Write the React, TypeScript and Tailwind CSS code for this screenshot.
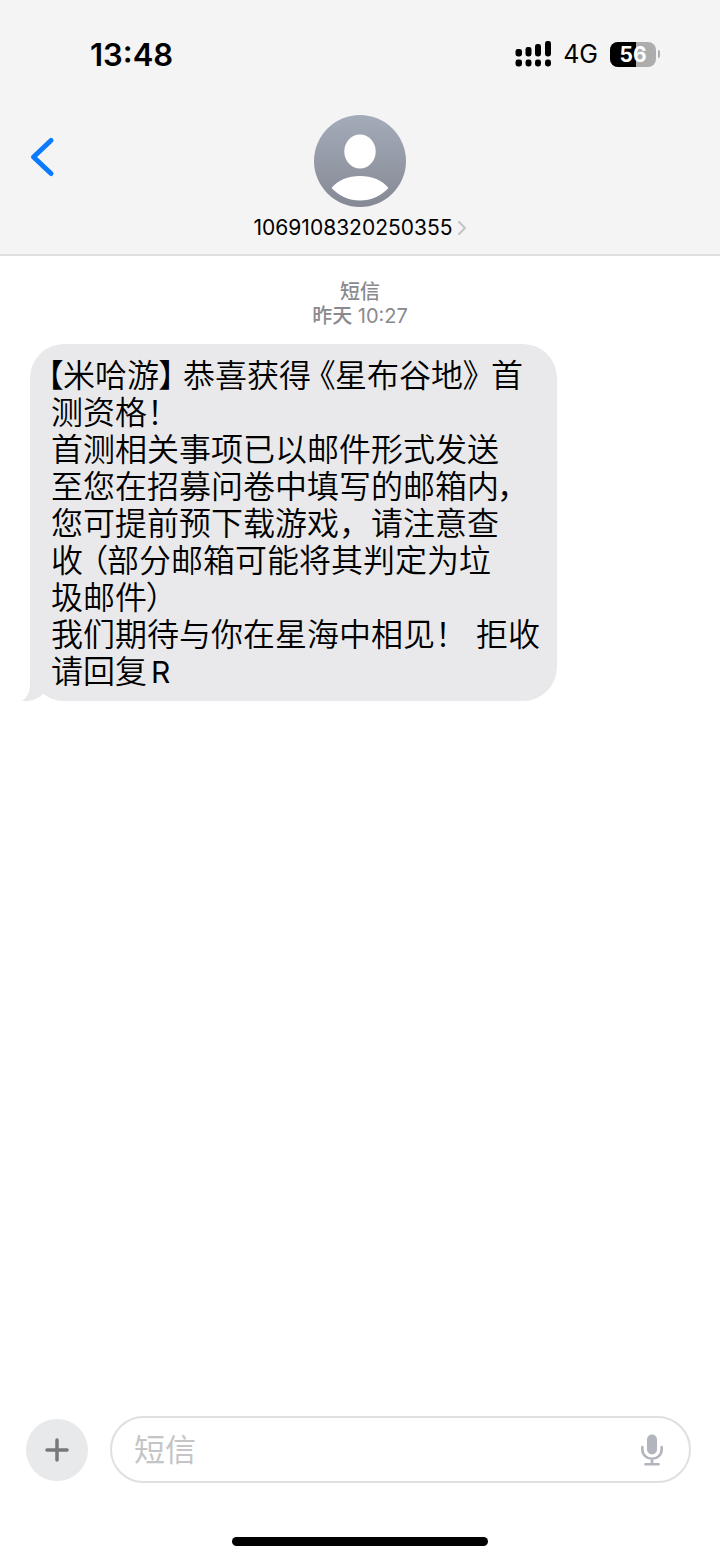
import React, { useState } from 'react'

// Punctuation set at its proportional (half) width
function Punct({ children, className = '' }: { children: React.ReactNode; className?: string }) {
  return <span className={`[font-feature-settings:'palt'] ${className}`}>{children}</span>
}

function SignalIcon() {
  return (
    <svg width="36" height="26" viewBox="0 0 36 26" role="img" aria-label="信号">
      <rect x="0.500" y="8" width="6.500" height="7.500" rx="2.4" />
      <rect x="10.500" y="6" width="6" height="9.500" rx="2.4" />
      <rect x="20" y="3" width="6" height="12.500" rx="2.4" />
      <rect x="30" y="0" width="6" height="15.500" rx="2.4" />
      <rect x="0.500" y="18.500" width="6.500" height="7" rx="2.4" />
      <rect x="10.500" y="18.500" width="6" height="7" rx="2.4" />
      <rect x="20" y="18.500" width="6" height="7" rx="2.4" />
      <rect x="30" y="18.500" width="6" height="7" rx="2.4" />
    </svg>
  )
}

function Battery({ level }: { level: number }) {
  return (
    <div className="flex items-center gap-0.5">
      <div className="relative flex h-[25px] w-[46px] items-center justify-center overflow-hidden rounded-lg bg-[#adadad]">
        <div className="absolute inset-y-0 left-0 bg-black" style={{ width: `${level}%` }} />
        <span className="relative text-[21px] leading-none font-bold text-white">{level}</span>
      </div>
      <div className="h-2 w-0.5 rounded-r-full bg-[#adadad]" />
    </div>
  )
}

function StatusBar() {
  return (
    <div className="flex h-[108px] items-center justify-between pr-[60px] pl-[90px]">
      <time className="text-[31px] leading-none font-semibold">13:48</time>
      <div className="flex items-center gap-3">
        <SignalIcon />
        <span className="text-[25px] leading-none">4G</span>
        <Battery level={56} />
      </div>
    </div>
  )
}

function Avatar() {
  return (
    <svg width="92" height="92" viewBox="0 0 92 92" aria-hidden="true">
      <defs>
        <linearGradient id="avatar" x1="0" y1="0" x2="0" y2="1">
          <stop offset="0" stopColor="#a4abb9" />
          <stop offset="1" stopColor="#858994" />
        </linearGradient>
      </defs>
      <circle cx="46" cy="46" r="46" fill="url(#avatar)" />
      <ellipse cx="46" cy="36.5" rx="15.7" ry="17" fill="#fff" />
      <path d="M17.5 73C24 65 34 61 46 61s22 4 28.500 12C67 81 57 85.500 46 85.500S25 81 17.500 73z" fill="#fff" />
    </svg>
  )
}

function Header() {
  return (
    <header className="border-b-2 border-[#dedede] bg-[#f4f4f4]">
      <StatusBar />
      <div className="grid grid-cols-[1fr_auto_1fr] items-start px-7 pt-[7px] pb-[13px]">
        <button aria-label="返回" className="flex h-[84px] w-12 items-center">
          <svg width="28" height="42" viewBox="0 0 28 42" fill="none" stroke="#0a7aff" strokeWidth="5" strokeLinecap="round" strokeLinejoin="round">
            <path d="M23 4.500L5.500 21L23 37.500" />
          </svg>
        </button>
        <a href="#contact" className="flex flex-col items-center gap-2">
          <Avatar />
          <span className="flex items-center gap-1.5 text-[21px] leading-[26px]">
            1069108320250355
            <svg width="8" height="14" viewBox="0 0 8 14" fill="none" stroke="#c4c4c6" strokeWidth="2" strokeLinecap="round" strokeLinejoin="round" aria-hidden="true">
              <path d="M1 1l6 6l-6 6" />
            </svg>
          </span>
        </a>
      </div>
    </header>
  )
}

function Message() {
  return (
    <div className="relative ml-[30px] w-fit rounded-[34px] bg-[#e9e9eb] pt-[13px] pr-[17px] pb-[11px] pl-[21px]">
      <svg className="absolute bottom-0 -left-[9px]" width="40" height="40" viewBox="0 0 40 40" fill="#e9e9eb" aria-hidden="true">
        <path d="M9 0V22C9 31 6 37.500 0 40C8 41 16 38.500 21 34L40 20V0z" />
      </svg>
      <p className="relative text-[32px] leading-[37px] font-[350] whitespace-nowrap">
        <Punct className="-ml-1">【</Punct>米哈游<Punct className="mr-2">】</Punct>恭喜获得<Punct className="ml-2">《</Punct>星布谷地<Punct className="mr-3">》</Punct>首
        <br />
        测资格<Punct>！</Punct>
        <br />
        首测相关事项已以邮件形式发送
        <br />
        至您在招募问卷中填写的邮箱内<Punct>，</Punct>
        <br />
        您可提前预下载游戏，请注意查
        <br />
        收<Punct className="ml-2">（</Punct>部分邮箱可能将其判定为垃
        <br />
        圾邮件<Punct>）</Punct>
        <br />
        我们期待与你在星海中相见！ 拒收
        <br />
        请回复<span className="ml-1 text-[30px] leading-none font-normal">R</span>
      </p>
    </div>
  )
}

function Composer() {
  const [text, setText] = useState('')

  return (
    <form className="flex items-center gap-[22px] pr-[29px] pl-[26px]" onSubmit={(e) => e.preventDefault()}>
      <button type="button" aria-label="添加" className="flex size-[62px] shrink-0 items-center justify-center rounded-full bg-[#e8e9eb]">
        <svg width="24" height="24" viewBox="0 0 24 24" stroke="#77787c" strokeWidth="3.500" strokeLinecap="round" aria-hidden="true">
          <path d="M12 2v20M2 12h20" />
        </svg>
      </button>
      <div className="flex h-[67px] min-w-0 flex-1 items-center rounded-full border-2 border-[#e0e0e1] pr-[26px] pl-[22px]">
        <input
          className="min-w-0 flex-1 text-[31px] leading-10 outline-none placeholder:text-[#c5c5c7]"
          aria-label="短信"
          placeholder="短信"
          value={text}
          onChange={(e) => setText(e.target.value)}
        />
        <button type="button" aria-label="听写">
          <svg width="22" height="32" viewBox="0 0 22 32" fill="none" stroke="#b2b5be" strokeWidth="2.600" strokeLinecap="round" aria-hidden="true">
            <rect x="6" y="0.500" width="10" height="20" rx="5" fill="#b2b5be" stroke="none" />
            <path d="M1.300 13v2.500a9.700 9.300 0 0 0 19.400 0V13M11 25v5M4.500 30.300h13" />
          </svg>
        </button>
      </div>
    </form>
  )
}

export default function App() {
  return (
    <div className="flex min-h-screen flex-col bg-white font-['Inter','Noto_Sans_CJK_SC',sans-serif] text-black" lang="zh-CN">
      <Header />
      <main className="flex-1 pt-6">
        <div className="mb-4 text-center text-[20px] leading-6 text-[#8a8a8e]">
          <p className="font-medium">短信</p>
          <p>
            <span className="font-medium">昨天</span> 10:27
          </p>
        </div>
        <Message />
      </main>
      <footer className="flex flex-col gap-[54px] pb-[15px]">
        <Composer />
        <div className="h-[9px] w-64 self-center rounded-full bg-black" />
      </footer>
    </div>
  )
}
